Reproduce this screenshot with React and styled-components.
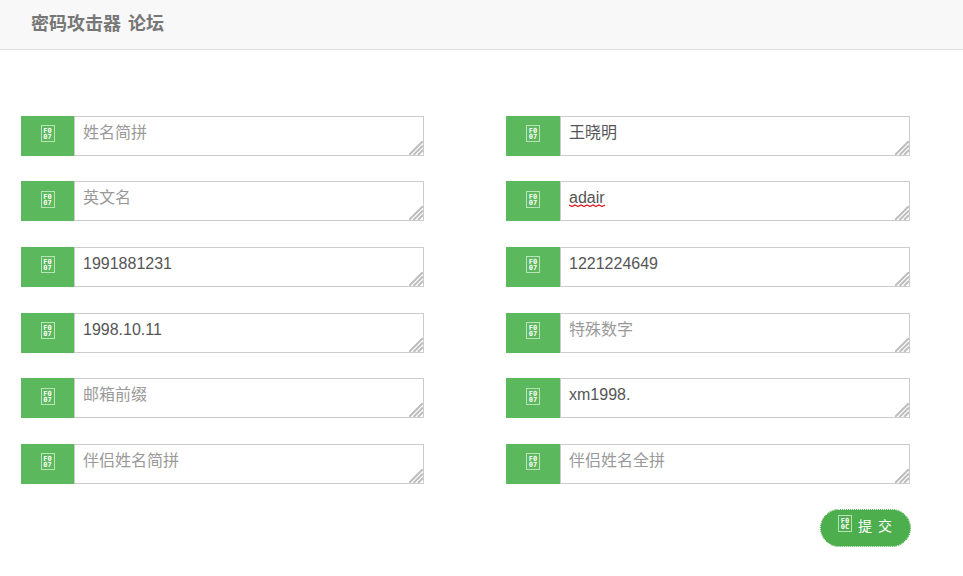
import React from 'react';
import styled, { createGlobalStyle } from 'styled-components';

const GlobalStyle = createGlobalStyle`
    html, body {
        margin: 0;
        padding: 0;
        background: #fff;
        font-family: "Liberation Sans", "Noto Sans CJK SC", sans-serif;
    }
`;

const Header = styled.header`
    height: 49px;
    border-bottom: 1px solid #e0e0e0;
    background: #f8f8f8;
    display: flex;
    align-items: center;
    padding-left: 31px;
`;

const Brand = styled.a`
    font-size: 18px;
    font-weight: 700;
    word-spacing: 2px;
    color: #777;
    margin-top: -5px;
`;

const Form = styled.form`
    padding: 65.6px 0 0 21px;
    width: 889px;
`;

const Grid = styled.div`
    display: grid;
    grid-template-columns: 403px 404px;
    column-gap: 82px;
    row-gap: 25.65px;
`;

const Group = styled.div`
    position: relative;
    display: flex;
    height: 40px;
`;

const Addon = styled.span`
    flex: none;
    width: ${(p) => p.$width}px;
    padding-bottom: 4px;
    box-sizing: border-box;
    background: #5cb85c;
    display: flex;
    align-items: center;
    justify-content: center;
`;

// missing-glyph box the icon font falls back to
const GlyphBox = styled.i`
    box-sizing: border-box;
    display: block;
    width: 14px;
    height: 17px;
    border: 1px solid #b9e2b9;
    color: #fff;
    font: 700 7px/6px "DejaVu Sans Mono", monospace;
    font-style: normal;
    text-align: center;
    padding-top: 2px;
    letter-spacing: 0;
    white-space: pre-line;
`;

const Input = styled.textarea`
    box-sizing: border-box;
    flex: 1;
    min-width: 0;
    height: 40px;
    margin: 0;
    padding: 5px 8px;
    border: 1px solid #ccc;
    border-radius: 0;
    outline: none;
    resize: none;
    background: #fff;
    color: #555;
    font: 16px/22px "Liberation Sans", "Noto Sans CJK SC", sans-serif;

    &::placeholder {
        color: #999;
        opacity: 1;
    }
`;

const Grip = styled.svg`
    position: absolute;
    right: 1px;
    bottom: 1px;
    width: 14px;
    height: 14px;
    pointer-events: none;
`;

const Squiggle = styled.svg`
    position: absolute;
    left: ${(p) => p.$left}px;
    top: 23px;
    width: 36px;
    height: 3px;
    pointer-events: none;
`;

const Actions = styled.div`
    display: flex;
    justify-content: flex-end;
    margin-top: 25px;
    width: 890px;
`;

const Submit = styled.button`
    box-sizing: border-box;
    width: 91px;
    height: 38px;
    padding: 0 0 0 17px;
    display: flex;
    align-items: flex-start;
    gap: 6px;
    border: 1px solid #4cae4c;
    border-radius: 19px;
    background: #4cae4c;
    color: #fff;
    font: 14px/20px "Liberation Sans", "Noto Sans CJK SC", sans-serif;
    letter-spacing: 1px;
    outline: 1px dotted #fff;
    outline-offset: -1px;
`;

const SubmitIcon = styled(GlyphBox)`
    margin-top: 5px;
    height: 17px;
`;

const SubmitLabel = styled.span`
    margin-top: 6px;
`;

const left = [
    { placeholder: '姓名简拼' },
    { placeholder: '英文名' },
    { value: '1991881231' },
    { value: '1998.10.11' },
    { placeholder: '邮箱前缀' },
    { placeholder: '伴侣姓名简拼' },
];

const right = [
    { value: '王晓明' },
    { value: 'adair', misspelled: true },
    { value: '1221224649' },
    { placeholder: '特殊数字' },
    { value: 'xm1998.' },
    { placeholder: '伴侣姓名全拼' },
];

function Field({ addon, placeholder, value, misspelled }) {
    return (
        <Group>
            <Addon $width={addon}>
                <GlyphBox>{'F0\n07'}</GlyphBox>
            </Addon>
            <Input placeholder={placeholder} defaultValue={value} spellCheck={false} />
            {misspelled && (
                <Squiggle $left={addon + 9} viewBox="0 0 36 3">
                    <path d="M0 1 L3 2.5 L6 1 L9 2.5 L12 1 L15 2.5 L18 1 L21 2.5 L24 1 L27 2.5 L30 1 L33 2.5 L36 1" fill="none" stroke="#d8141c" strokeWidth="1.2" />
                </Squiggle>
            )}
            <Grip viewBox="0 0 14 14">
                <path d="M0 14 L14 0 M4.5 14 L14 4.5 M9 14 L14 9" fill="none" stroke="#bdbdbd" strokeWidth="2" />
            </Grip>
        </Group>
    );
}

export default function App() {
    return (
        <>
            <GlobalStyle />
            <Header>
                <Brand>密码攻击器 论坛</Brand>
            </Header>
            <Form onSubmit={(e) => e.preventDefault()}>
                <Grid>
                    {left.map((f, i) => [
                        <Field key={'l' + i} addon={53} {...f} />,
                        <Field key={'r' + i} addon={54} {...right[i]} />,
                    ])}
                </Grid>
                <Actions>
                    <Submit type="submit">
                        <SubmitIcon>{'F0\n0C'}</SubmitIcon>
                        <SubmitLabel>提 交</SubmitLabel>
                    </Submit>
                </Actions>
            </Form>
        </>
    );
}
